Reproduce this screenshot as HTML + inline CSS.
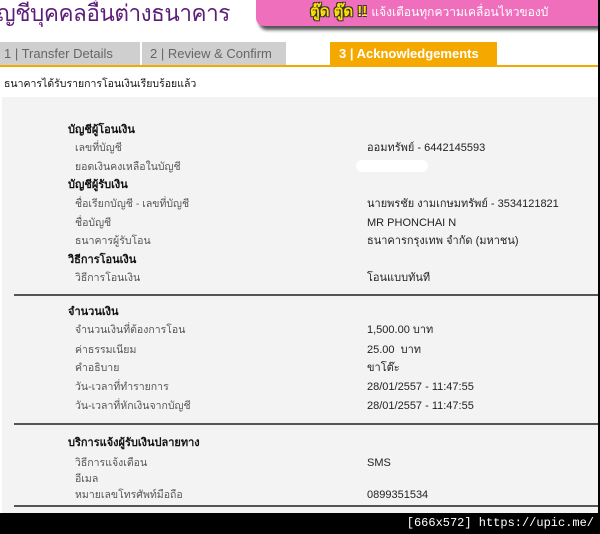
<!DOCTYPE html>
<html><head><meta charset="utf-8"><style>
*{margin:0;padding:0;box-sizing:border-box}
body{width:600px;height:534px;background:#000;position:relative;overflow:hidden;font-family:"Liberation Sans","Noto Sans CJK SC",sans-serif}
#pg{position:absolute;left:0;top:0;width:598px;height:513px;background:#fff;overflow:hidden}
.t{position:absolute;white-space:nowrap}
.title{left:-3px;top:-2px;font-size:23px;line-height:30px;color:#5c1e78;letter-spacing:-0.5px;transform:scaleX(0.98);transform-origin:left}
.banner{position:absolute;left:256px;top:0;width:360px;height:26px;background:#f06fbd;border-radius:0 0 0 8px;box-shadow:3px 4px 3px #555}
.banner span{position:absolute;top:4px;font-size:12px;line-height:16px;color:#fff;white-space:nowrap}
.tab{position:absolute;top:42px;height:23px;font-size:13px;line-height:23px;padding-left:4px;white-space:nowrap;overflow:hidden}
.bar{position:absolute;left:0;top:65px;width:598px;height:2px;background:#f5a800}
.panel{position:absolute;left:2px;top:97px;width:596px;height:416px;background:#f3f3f3}
.h,.l,.v{position:absolute;white-space:nowrap;line-height:14px}
.h{left:68px;font-size:11px;font-weight:bold;color:#111}
.l{left:75px;font-size:10.5px;color:#555}
.v{left:367px;font-size:11px;color:#222}
.line{position:absolute;left:14px;width:584px;height:2px;background:#555}
</style></head><body><div id="pg">
<div class="t title">ัญชีบุคคลอื่นต่างธนาคาร</div>
<div class="banner"><span style="left:54px;top:2px;font-size:15px;line-height:20px;color:#ffe000;font-weight:bold;text-shadow:1px 1px 0 #333,-1px -1px 0 #333,1px -1px 0 #333,-1px 1px 0 #333">ตู๊ด ตู๊ด !!</span><span style="left:102px">... แจ้งเตือนทุกความเคลื่อนไหวของบั</span></div>
<div class="tab" style="left:0;width:140px;background:#cfcfcf;color:#666">1 | Transfer Details</div>
<div class="tab" style="left:142px;width:144px;background:#cfcfcf;color:#666;padding-left:8px">2 | Review &amp; Confirm</div>
<div class="tab" style="left:330px;width:167px;background:#f5a800;color:#fff;font-weight:bold;padding-left:9px">3 | Acknowledgements</div>
<div class="bar"></div>
<div class="t" style="left:4px;top:77px;font-size:10.5px;line-height:14px;color:#111">ธนาคารได้รับรายการโอนเงินเรียบร้อยแล้ว</div>
<div class="panel"></div>
<div class="h" style="top:123px">บัญชีผู้โอนเงิน</div>
<div class="l" style="top:141px">เลขที่บัญชี</div><div class="v" style="top:141px">ออมทรัพย์ - 6442145593</div>
<div class="l" style="top:160px">ยอดเงินคงเหลือในบัญชี</div>
<div style="position:absolute;left:356px;top:160px;width:72px;height:12px;background:#fff;border-radius:6px"></div>
<div class="h" style="top:178px">บัญชีผู้รับเงิน</div>
<div class="l" style="top:197px">ชื่อเรียกบัญชี - เลขที่บัญชี</div><div class="v" style="top:197px">นายพรชัย งามเกษมทรัพย์ - 3534121821</div>
<div class="l" style="top:216px">ชื่อบัญชี</div><div class="v" style="top:216px">MR PHONCHAI N</div>
<div class="l" style="top:234px">ธนาคารผู้รับโอน</div><div class="v" style="top:234px">ธนาคารกรุงเทพ จำกัด (มหาชน)</div>
<div class="h" style="top:253px">วิธีการโอนเงิน</div>
<div class="l" style="top:271px">วิธีการโอนเงิน</div><div class="v" style="top:271px">โอนแบบทันที</div>
<div class="line" style="top:294px"></div>
<div class="h" style="top:305px">จำนวนเงิน</div>
<div class="l" style="top:323px">จำนวนเงินที่ต้องการโอน</div><div class="v" style="top:323px">1,500.00 บาท</div>
<div class="l" style="top:343px">ค่าธรรมเนียม</div><div class="v" style="top:343px">25.00&nbsp; บาท</div>
<div class="l" style="top:361px">คำอธิบาย</div><div class="v" style="top:361px">ขาโต๊ะ</div>
<div class="l" style="top:380px">วัน-เวลาที่ทำรายการ</div><div class="v" style="top:380px">28/01/2557 - 11:47:55</div>
<div class="l" style="top:399px">วัน-เวลาที่หักเงินจากบัญชี</div><div class="v" style="top:399px">28/01/2557 - 11:47:55</div>
<div class="line" style="top:423px"></div>
<div class="h" style="top:436px">บริการแจ้งผู้รับเงินปลายทาง</div>
<div class="l" style="top:456px">วิธีการแจ้งเตือน</div><div class="v" style="top:456px">SMS</div>
<div class="l" style="top:472px">อีเมล</div>
<div class="l" style="top:488px">หมายเลขโทรศัพท์มือถือ</div><div class="v" style="top:488px">0899351534</div>
<div class="line" style="top:505px"></div>
</div>
<div class="t" style="right:6px;top:516px;font-size:12px;color:#fff;font-family:'Liberation Mono',monospace">[666x572] https://upic.me/</div>
</body></html>
